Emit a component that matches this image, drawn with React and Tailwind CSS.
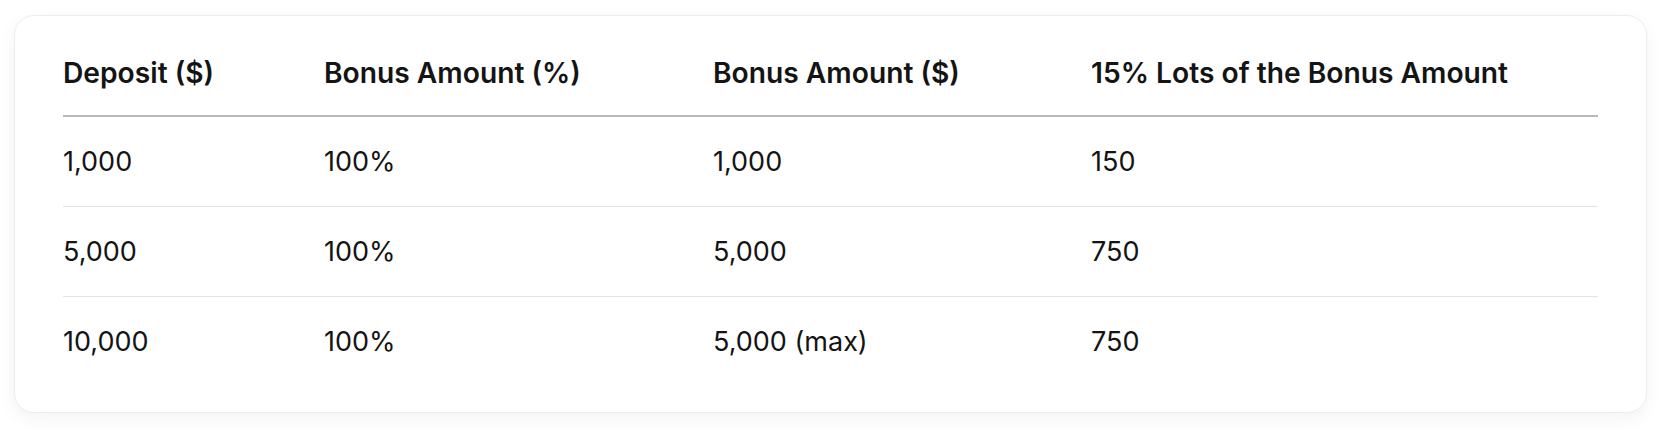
import React from 'react';

const rows = [
  ['1,000', '100%', '1,000', '150'],
  ['5,000', '100%', '5,000', '750'],
  ['10,000', '100%', '5,000 (max)', '750'],
];

const headers = ['Deposit ($)', 'Bonus Amount (%)', 'Bonus Amount ($)', '15% Lots of the Bonus Amount'];

export default function App() {
  return (
    <div className="min-h-[430px] bg-white pl-[14px] pt-[15px]" style={{ fontFamily: 'Inter, "Noto Sans", sans-serif' }}>
      <div className="w-[1633px] rounded-[20px] border border-[#ededed] bg-white px-[48px] pt-[12px] pb-[26px] shadow-[0_6px_18px_rgba(0,0,0,0.05)]">
        <table className="w-full table-fixed border-collapse text-left text-[#141414]">
          <colgroup>
            <col className="w-[261px]" />
            <col className="w-[389px]" />
            <col className="w-[378px]" />
            <col />
          </colgroup>
          <thead>
            <tr className="border-b-2 border-[#b9b9b9]">
              {headers.map((h) => (
                <th key={h} className="h-[88px] p-0 pt-[4px] align-middle text-[28.2px] font-semibold">
                  {h}
                </th>
              ))}
            </tr>
          </thead>
          <tbody>
            {rows.map((r, i) => (
              <tr key={i} className={i < rows.length - 1 ? 'border-b border-[#e3e3e3]' : ''}>
                {r.map((c, j) => (
                  <td key={j} className="h-[90px] p-0 pt-[2px] align-middle text-[27px] font-normal">
                    {c}
                  </td>
                ))}
              </tr>
            ))}
          </tbody>
        </table>
      </div>
    </div>
  );
}
